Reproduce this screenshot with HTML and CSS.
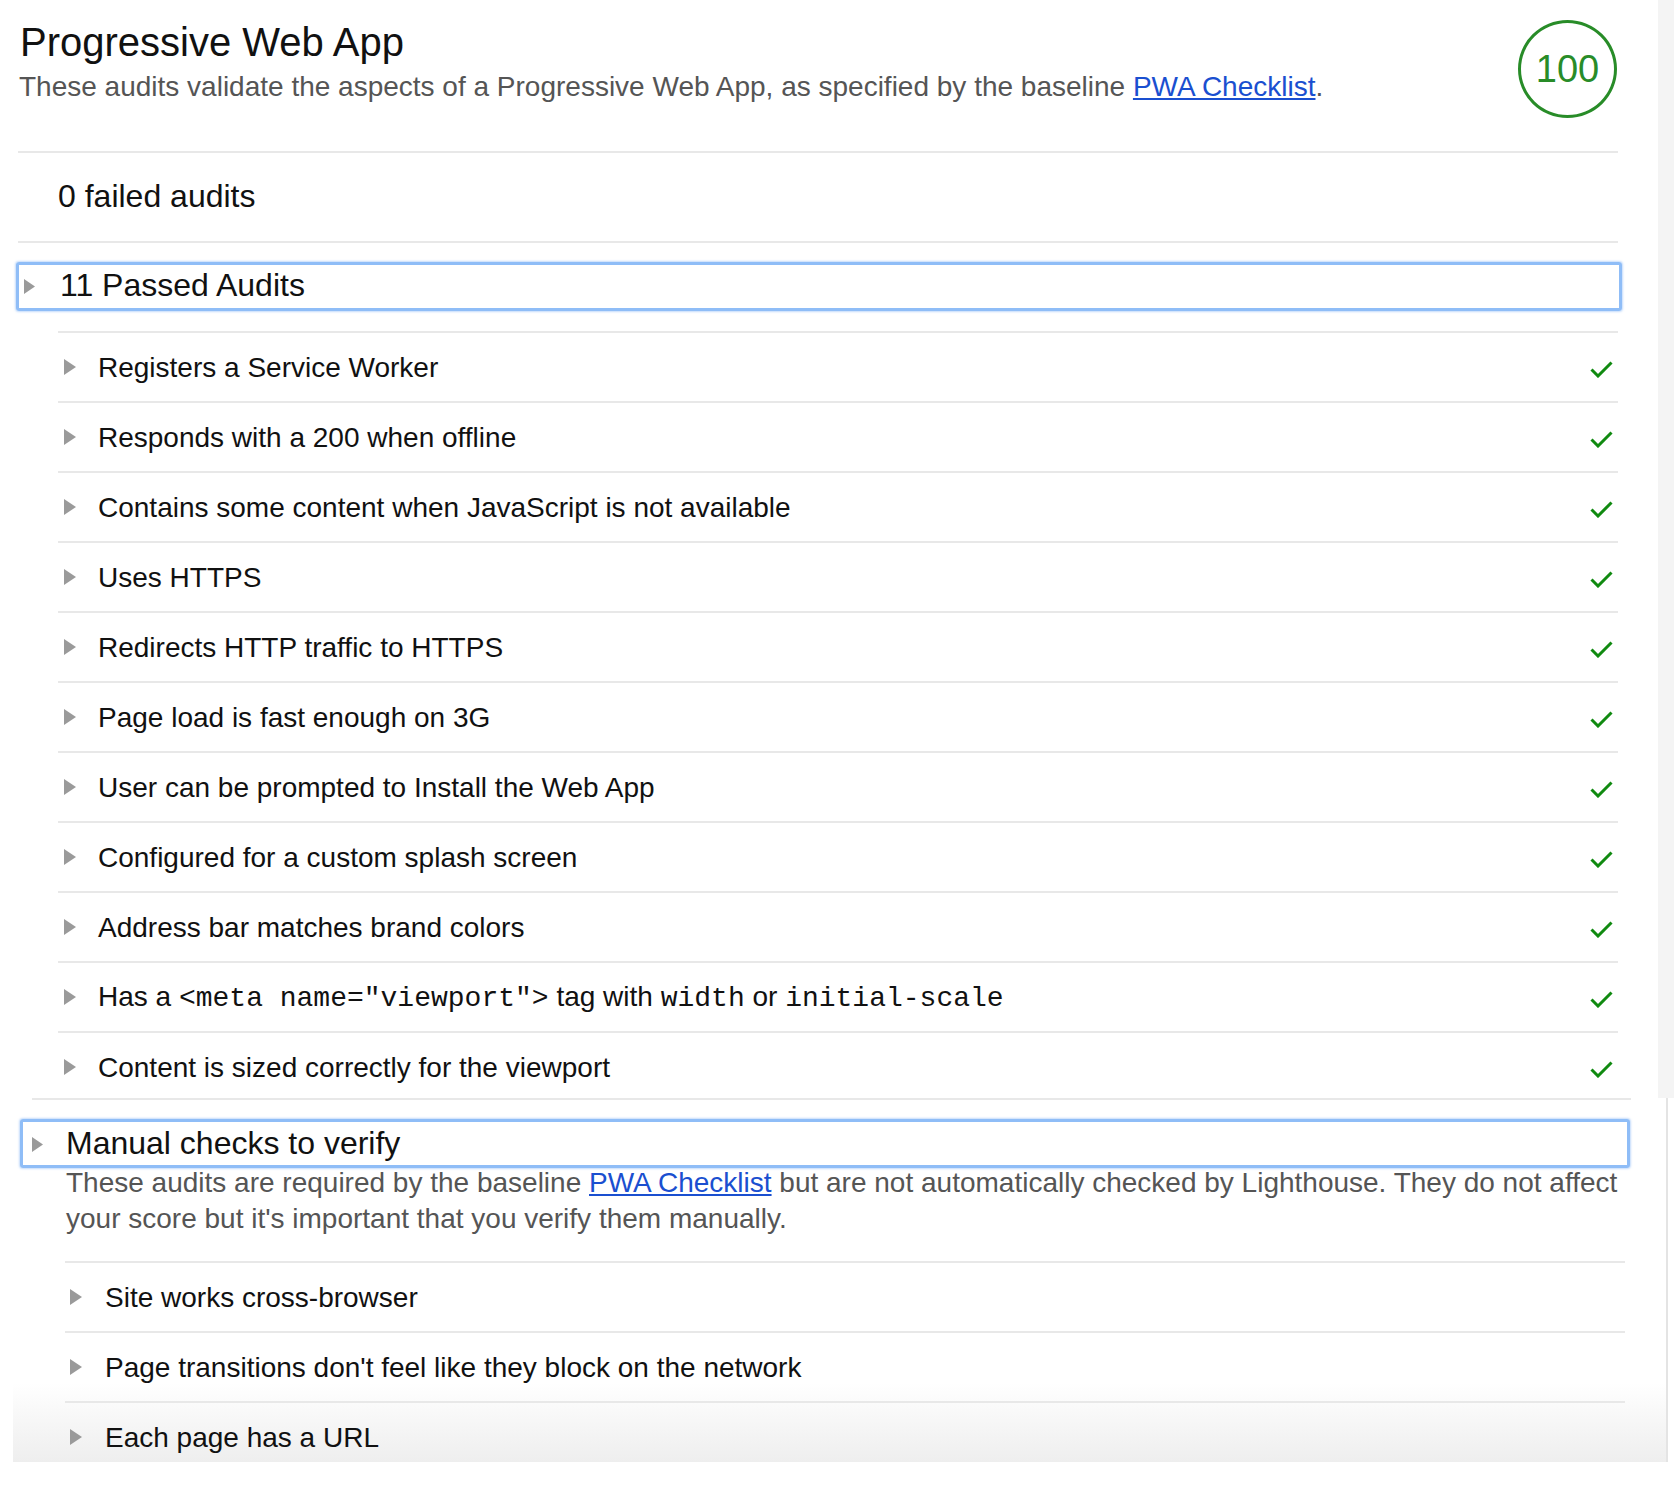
FILE: index.html
```html
<!DOCTYPE html>
<html lang="en">
<head>
<meta charset="utf-8">
<title>Progressive Web App</title>
<link rel="stylesheet" href="styles.css">
</head>
<body>
<div class="top">
  <div class="main">
    <header class="cat-header">
      <div class="cat-text">
        <h1 class="cat-title">Progressive Web App</h1>
        <p class="cat-desc">These audits validate the aspects of a Progressive Web App, as specified by the baseline <a href="#">PWA Checklist</a>.</p>
      </div>
      <div class="score">100</div>
    </header>
    <div class="failed">0 failed audits</div>
    <div class="group-head passed">
      <svg class="tri-lg" width="11" height="15" viewBox="0 0 11 15"><path d="M0 0 L11 7.5 L0 15Z"/></svg>
      <span>11 Passed Audits</span>
    </div>
    <div class="audits">
      <div class="audit"><svg class="tri" width="12" height="16" viewBox="0 0 12 16"><path d="M0 0 L12 8 L0 16Z"/></svg><span class="label">Registers a Service Worker</span><svg class="check" width="23" height="17" viewBox="0 0 23 17"><path d="M1.5 8.5 L8 15 L21.5 1.5"/></svg></div>
      <div class="audit"><svg class="tri" width="12" height="16" viewBox="0 0 12 16"><path d="M0 0 L12 8 L0 16Z"/></svg><span class="label">Responds with a 200 when offline</span><svg class="check" width="23" height="17" viewBox="0 0 23 17"><path d="M1.5 8.5 L8 15 L21.5 1.5"/></svg></div>
      <div class="audit"><svg class="tri" width="12" height="16" viewBox="0 0 12 16"><path d="M0 0 L12 8 L0 16Z"/></svg><span class="label">Contains some content when JavaScript is not available</span><svg class="check" width="23" height="17" viewBox="0 0 23 17"><path d="M1.5 8.5 L8 15 L21.5 1.5"/></svg></div>
      <div class="audit"><svg class="tri" width="12" height="16" viewBox="0 0 12 16"><path d="M0 0 L12 8 L0 16Z"/></svg><span class="label">Uses HTTPS</span><svg class="check" width="23" height="17" viewBox="0 0 23 17"><path d="M1.5 8.5 L8 15 L21.5 1.5"/></svg></div>
      <div class="audit"><svg class="tri" width="12" height="16" viewBox="0 0 12 16"><path d="M0 0 L12 8 L0 16Z"/></svg><span class="label">Redirects HTTP traffic to HTTPS</span><svg class="check" width="23" height="17" viewBox="0 0 23 17"><path d="M1.5 8.5 L8 15 L21.5 1.5"/></svg></div>
      <div class="audit"><svg class="tri" width="12" height="16" viewBox="0 0 12 16"><path d="M0 0 L12 8 L0 16Z"/></svg><span class="label">Page load is fast enough on 3G</span><svg class="check" width="23" height="17" viewBox="0 0 23 17"><path d="M1.5 8.5 L8 15 L21.5 1.5"/></svg></div>
      <div class="audit"><svg class="tri" width="12" height="16" viewBox="0 0 12 16"><path d="M0 0 L12 8 L0 16Z"/></svg><span class="label">User can be prompted to Install the Web App</span><svg class="check" width="23" height="17" viewBox="0 0 23 17"><path d="M1.5 8.5 L8 15 L21.5 1.5"/></svg></div>
      <div class="audit"><svg class="tri" width="12" height="16" viewBox="0 0 12 16"><path d="M0 0 L12 8 L0 16Z"/></svg><span class="label">Configured for a custom splash screen</span><svg class="check" width="23" height="17" viewBox="0 0 23 17"><path d="M1.5 8.5 L8 15 L21.5 1.5"/></svg></div>
      <div class="audit"><svg class="tri" width="12" height="16" viewBox="0 0 12 16"><path d="M0 0 L12 8 L0 16Z"/></svg><span class="label">Address bar matches brand colors</span><svg class="check" width="23" height="17" viewBox="0 0 23 17"><path d="M1.5 8.5 L8 15 L21.5 1.5"/></svg></div>
      <div class="audit"><svg class="tri" width="12" height="16" viewBox="0 0 12 16"><path d="M0 0 L12 8 L0 16Z"/></svg><span class="label">Has a <code>&lt;meta name="viewport"&gt;</code> tag with <code>width</code> or <code>initial-scale</code></span><svg class="check" width="23" height="17" viewBox="0 0 23 17"><path d="M1.5 8.5 L8 15 L21.5 1.5"/></svg></div>
      <div class="audit"><svg class="tri" width="12" height="16" viewBox="0 0 12 16"><path d="M0 0 L12 8 L0 16Z"/></svg><span class="label">Content is sized correctly for the viewport</span><svg class="check" width="23" height="17" viewBox="0 0 23 17"><path d="M1.5 8.5 L8 15 L21.5 1.5"/></svg></div>
    </div>
  </div>
  <div class="scrollbar"></div>
</div>
<div class="lower">
  <div class="lower-rule"></div>
  <div class="group-head manual">
    <svg class="tri-lg" width="11" height="15" viewBox="0 0 11 15"><path d="M0 0 L11 7.5 L0 15Z"/></svg>
    <span>Manual checks to verify</span>
  </div>
  <p class="manual-desc">These audits are required by the baseline <a href="#">PWA Checklist</a> but are not automatically checked by Lighthouse. They do not affect<br>your score but it's important that you verify them manually.</p>
  <div class="manual-list">
    <div class="audit"><svg class="tri" width="12" height="16" viewBox="0 0 12 16"><path d="M0 0 L12 8 L0 16Z"/></svg><span class="label">Site works cross-browser</span></div>
    <div class="audit"><svg class="tri" width="12" height="16" viewBox="0 0 12 16"><path d="M0 0 L12 8 L0 16Z"/></svg><span class="label">Page transitions don't feel like they block on the network</span></div>
    <div class="audit"><svg class="tri" width="12" height="16" viewBox="0 0 12 16"><path d="M0 0 L12 8 L0 16Z"/></svg><span class="label">Each page has a URL</span></div>
  </div>
</div>
</body>
</html>
```

FILE: styles.css
```css
html, body {
  margin: 0;
  padding: 0;
  background: #ffffff;
}

body {
  font-family: "Liberation Sans", Arial, Helvetica, sans-serif;
  color: #111111;
}

a {
  color: #1a4fd0;
  text-decoration: underline;
}

.top {
  display: flex;
  height: 1098px;
  overflow: hidden;
}

.main {
  flex: 1;
  padding: 0 40px 0 18px;
}

.scrollbar {
  width: 16px;
  background: #f4f4f4;
}

.cat-header {
  display: flex;
  justify-content: space-between;
  align-items: flex-start;
  box-sizing: border-box;
  height: 151px;
  padding: 19px 1px 0 2px;
}

.cat-title {
  margin: 0;
  font-size: 40px;
  line-height: 46px;
  font-weight: normal;
  color: #111111;
}

.cat-desc {
  margin: 4px 0 0 -1px;
  font-size: 28px;
  line-height: 36px;
  color: #555555;
}

.score {
  margin-top: 1px;
  width: 99px;
  height: 98px;
  box-sizing: border-box;
  border: 3.5px solid #288c28;
  border-radius: 50%;
  display: flex;
  align-items: center;
  justify-content: center;
  color: #288c28;
  font-size: 38px;
  padding-top: 1px;
}

.failed {
  border-top: 2px solid #e8e8e8;
  border-bottom: 2px solid #e8e8e8;
  padding: 23px 0 25px 40px;
  font-size: 32px;
  line-height: 40px;
}

.group-head {
  display: flex;
  align-items: center;
  box-sizing: border-box;
  height: 49px;
  border: 3px solid #8fbdf7;
  border-radius: 3px;
  box-shadow: 0 0 2px 1px rgba(150, 192, 247, 0.55);
  font-size: 32px;
  line-height: 38px;
}

.group-head .tri-lg {
  flex: none;
  fill: #9a9a9a;
}

.group-head.passed {
  margin: 19px -4px 0 -2px;
  padding: 0 0 3px 5px;
}

.group-head.passed .tri-lg {
  margin: 2px 25px 0 0;
}

.audits {
  margin: 20px 0 0 40px;
}

.audit {
  display: flex;
  align-items: center;
  box-sizing: border-box;
  height: 70px;
  border-top: 2px solid #e8e8e8;
  padding: 0 5px 0 6px;
  font-size: 28px;
}

.audit .tri {
  flex: none;
  fill: #9a9a9a;
  margin-right: 22px;
}

.audit .label {
  flex: 1;
  padding-top: 1px;
}

.audit code {
  font-family: "Liberation Mono", "Courier New", monospace;
  font-size: 28px;
}

.audit .check {
  flex: none;
  margin-top: 4px;
  fill: none;
  stroke: #108a10;
  stroke-width: 3;
}

.lower {
  margin-left: 13px;
  width: 1655px;
  height: 364px;
  box-sizing: border-box;
  border-right: 2px solid #e4e4e4;
  overflow: hidden;
  background: linear-gradient(to bottom, #ffffff 0, #ffffff 285px, #eeeeee 364px);
}

.lower-rule {
  margin-left: 19px;
  width: 1599px;
  height: 2px;
  background: #e8e8e8;
}

.group-head.manual {
  margin: 19px 0 0 7px;
  width: 1610px;
  padding: 0 0 1px 9px;
}

.group-head.manual .tri-lg {
  margin: 2px 23px 0 0;
}

.manual-desc {
  margin: -3px 0 0 53px;
  width: 1570px;
  font-size: 28px;
  line-height: 36px;
  color: #555555;
}

.manual-list {
  margin: 24px 0 0 52px;
  width: 1560px;
}

.manual-list .audit {
  padding-left: 5px;
}

.manual-list .audit .tri {
  margin-right: 23px;
}
```
